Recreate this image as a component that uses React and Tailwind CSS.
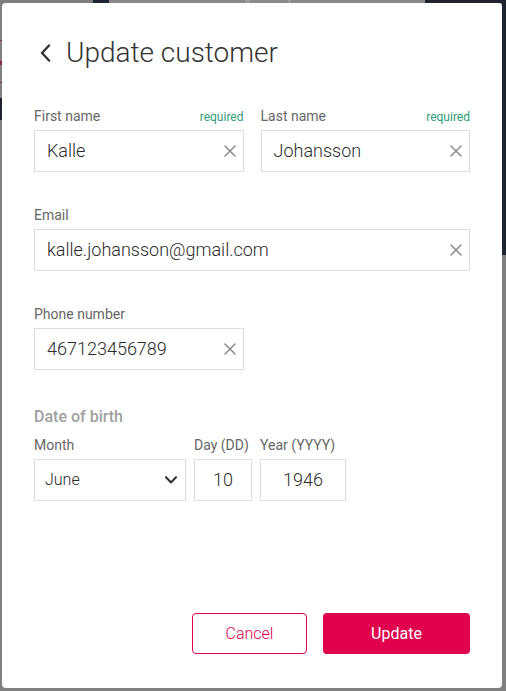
import React from 'react';

function ClearIcon() {
  return (
    <svg width="12" height="12" viewBox="0 0 12 12" className="shrink-0">
      <path d="M1 1L11 11M11 1L1 11" stroke="#8a8a8a" strokeWidth="1.5" strokeLinecap="round" />
    </svg>
  );
}

function Field({ label, required, value, className = '' }) {
  return (
    <div className={className}>
      <div className="flex items-baseline justify-between h-5 mb-1">
        <span className="text-sm leading-5 text-[#666]">{label}</span>
        {required && <span className="text-xs text-[#2f9b77]">required</span>}
      </div>
      <div className="flex items-center h-[42px] border border-[#dddddd] pl-3 pr-[7px]">
        <span className="flex-1 text-lg font-light text-[#2b2b2b]">{value}</span>
        <ClearIcon />
      </div>
    </div>
  );
}

function SmallLabel({ children }) {
  return <div className="text-sm leading-5 text-[#666] mb-1 whitespace-nowrap">{children}</div>;
}

export default function App() {
  return (
    <div className="relative w-[506px] h-[691px] bg-[#808080] overflow-hidden font-[Roboto,sans-serif]">
      {/* dimmed page behind the dialog */}
      <div className="flex flex-col h-full" aria-hidden="true">
        <div className="flex h-[3px]">
          <div className="w-[93px] bg-[#7e7e7e]" />
          <div className="w-[16px] bg-[#1f2432]" />
          <div className="w-[136px] bg-[#888]" />
          <div className="w-[5px] bg-[#9c9c9c]" />
          <div className="w-[38px] bg-[#8a8a8a]" />
          <div className="w-[3px] bg-[#9a9a9a]" />
          <div className="w-[134px] bg-[#888]" />
          <div className="flex-1 bg-[#1e2330]" />
        </div>
        <div className="flex flex-1 justify-between">
          <div className="w-[2px] flex flex-col">
            <div className="h-[37px]" />
            <div className="h-[1px] bg-[#8a2a45]" />
            <div className="h-[20px]" />
            <div className="h-[4px] bg-[#8a2a45]" />
            <div className="h-[17px]" />
            <div className="h-[1px] bg-[#8a2a45]" />
            <div className="h-[15px]" />
            <div className="h-[22px] bg-[#1f2432]" />
          </div>
          <div className="w-[4px] flex flex-col">
            <div className="h-[252px] bg-[#1e2330]" />
          </div>
        </div>
      </div>

      {/* dialog */}
      <div className="absolute left-[2px] top-[3px] w-[500px] h-[685px] bg-white rounded-[4px] flex flex-col px-8 pt-8 pb-[34px]">
        <div className="flex items-center gap-[14px] h-9">
          <svg width="14" height="18" viewBox="0 0 14 18" className="ml-1 shrink-0">
            <path d="M11 1.5L4 9L11 16.5" fill="none" stroke="#333" strokeWidth="2.4" strokeLinecap="round" strokeLinejoin="round" />
          </svg>
          <h1 className="text-[28px] leading-9 font-light text-[#333]">Update customer</h1>
        </div>

        <div className="flex gap-[17px] mt-[35px]">
          <Field label="First name" required value="Kalle" className="w-[210px]" />
          <Field label="Last name" required value="Johansson" className="w-[210px]" />
        </div>

        <Field label="Email" value="kalle.johansson@gmail.com" className="mt-[33px]" />

        <Field label="Phone number" value="467123456789" className="mt-[33px] w-[210px]" />

        <div className="mt-[35px]">
          <div className="text-base leading-6 font-medium text-[#a0a0a0]">Date of birth</div>
          <div className="flex gap-2 mt-1.5">
            <div className="w-[152px]">
              <SmallLabel>Month</SmallLabel>
              <div className="flex items-center justify-between h-[42px] border border-[#dddddd] pl-[10px] pr-2">
                <span className="text-base font-light text-[#2b2b2b]">June</span>
                <svg width="12" height="8" viewBox="0 0 12 8">
                  <path d="M1 1.2L6 6.5L11 1.2" fill="none" stroke="#333" strokeWidth="2.1" strokeLinecap="round" strokeLinejoin="round" />
                </svg>
              </div>
            </div>
            <div className="w-[58px]">
              <SmallLabel>Day (DD)</SmallLabel>
              <div className="flex items-center justify-center h-[42px] border border-[#dddddd] text-lg font-light text-[#2b2b2b]">10</div>
            </div>
            <div className="w-[86px]">
              <SmallLabel>Year (YYYY)</SmallLabel>
              <div className="flex items-center justify-center h-[42px] border border-[#dddddd] text-lg font-light text-[#2b2b2b]">1946</div>
            </div>
          </div>
        </div>

        <div className="mt-auto flex justify-end gap-4">
          <button className="w-[115px] h-[41px] rounded-[4px] border border-[#e0004e] text-[#e0004e] text-base font-light bg-white">Cancel</button>
          <button className="w-[147px] h-[41px] rounded-[4px] bg-[#e0004e] text-white text-base">Update</button>
        </div>
      </div>
    </div>
  );
}
